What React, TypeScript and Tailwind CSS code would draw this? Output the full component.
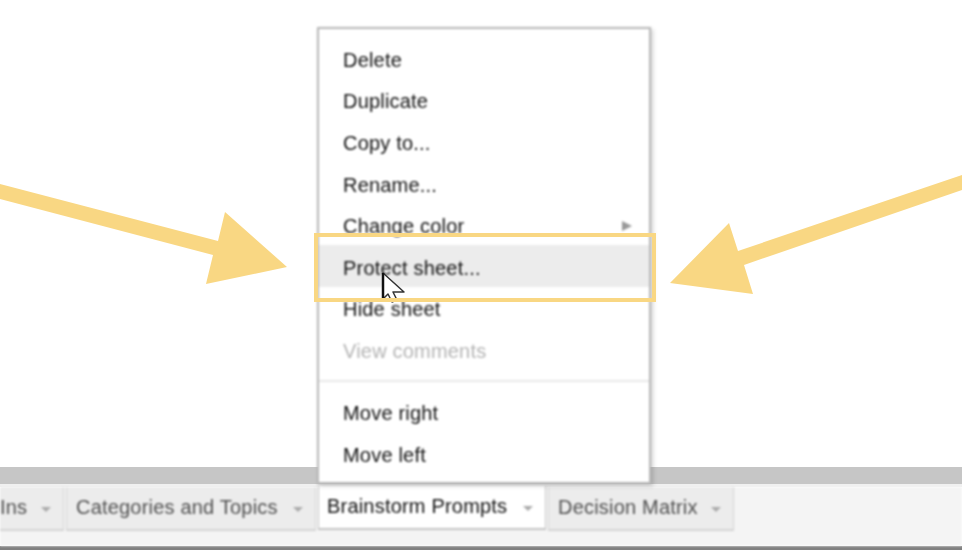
const items = [
  { label: "Delete" },
  { label: "Duplicate" },
  { label: "Copy to..." },
  { label: "Rename..." },
  { label: "Change color", arrow: true },
  { label: "Protect sheet...", active: true },
  { label: "Hide sheet" },
  { label: "View comments", disabled: true },
]

function Caret() {
  return <span className="mt-[2px] h-0 w-0 border-x-[5px] border-t-[5px] border-x-transparent border-t-[#aaaaaa]" />
}

function Tab({ label, width, active }: { label: string; width: string; active?: boolean }) {
  return (
    <div
      className={
        active
          ? `flex h-[44px] -translate-y-[1px] items-center justify-between border-x border-b-2 border-[#c4c4c4] bg-white pl-[8px] pr-[12px] text-[#111111] ${width}`
          : `flex h-[44px] items-center justify-between border-x border-b-2 border-[#d4d4d4] bg-[#ececec] pl-[9px] pr-[12px] text-[#505050] ${width}`
      }
    >
      <span className="-translate-y-[1px] whitespace-nowrap">{label}</span>
      <Caret />
    </div>
  )
}

function Row({ label, arrow, active, disabled }: { label: string; arrow?: boolean; active?: boolean; disabled?: boolean }) {
  return (
    <div
      className={`flex h-[41.6px] items-center justify-between pl-[24px] pr-[17px] ${
        active ? "-mt-[2px] mb-[2px] bg-[#ececec] pt-[4px]" : ""
      } ${disabled ? "text-[#b4b4b4]" : "text-[#111111]"}`}
    >
      <span>{label}</span>
      {arrow && <span className="h-0 w-0 border-y-[5px] border-l-[10px] border-y-transparent border-l-[#999999]" />}
    </div>
  )
}

export default function App() {
  return (
    <div className="relative flex h-[550px] w-[962px] flex-col overflow-hidden bg-white font-['Liberation_Sans',Arial,sans-serif] text-[20px] tracking-[0.2px]">
      <div className="flex-1 bg-white" />
      <div className="h-[17px] bg-[#c6c6c6]" />
      <div className="h-[3px] bg-[#f0f0f0]" />
      <div className="flex h-[59px] items-start gap-[2px] bg-[#f4f4f4] pl-0 blur-[0.8px]">
        <div className="flex h-[44px] w-[64px] items-center justify-between border-r border-b-2 border-[#d4d4d4] bg-[#ececec] pr-[12px] text-[#505050]">
          <span className="-translate-y-[1px]">Ins</span>
          <Caret />
        </div>
        <Tab label="Categories and Topics" width="w-[250px]" />
        <Tab label="Brainstorm Prompts" width="w-[228px]" active />
        <Tab label="Decision Matrix" width="w-[186px]" />
      </div>
      <div className="h-[4px] bg-[#808080]" />

      {/* context menu sits over the sheet and the tab bar */}
      <div className="absolute left-[317px] top-[27px] h-[457px] w-[334px] border-2 border-[#b8b8b8] bg-white pt-[10px] shadow-[2px_2px_4px_rgba(0,0,0,0.18)] blur-[0.8px]">
        {items.map((item) => (
          <Row key={item.label} {...item} />
        ))}
        <div className="mt-[8px] mb-[10px] h-[2px] bg-[#e8e8e8]" />
        <Row label="Move right" />
        <div className="pt-[1px]">
          <Row label="Move left" />
        </div>
      </div>

      <svg className="absolute left-0 top-0" width="962" height="550" viewBox="0 0 962 550">
        <path
          d="M383 273 L383 299 L388 294 L392 302 L397 300 L393 292 L404 292 Z"
          fill="#ffffff"
          stroke="#333333"
          strokeWidth="1.5"
          strokeLinejoin="round"
        />
        <path d="M383 273 L383 299" stroke="#111111" strokeWidth="2.5" />
      </svg>

      {/* yellow highlight box */}
      <div className="absolute left-[314px] top-[233px] h-[69px] w-[342px] border-4 border-[#f9d783]" />

      <svg className="absolute left-0 top-0" width="962" height="550" viewBox="0 0 962 550">
        <path d="M0 184 L218 241 L225 212 L287 267 L206 284 L213 255 L0 199 Z" fill="#f9d783" />
        <path d="M962 175 L962 190 L744 265 L753 294 L670 283 L729 223 L738 251 Z" fill="#f9d783" />
      </svg>
    </div>
  )
}
